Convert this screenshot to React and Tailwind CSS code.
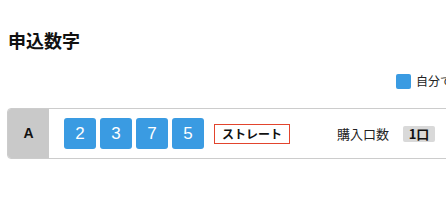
export default function App() {
  const nums = ["2", "3", "7", "5"];
  return (
    <div className="w-[446px] h-[210px] overflow-hidden bg-white" style={{ fontFamily: '"Noto Sans CJK JP", "Liberation Sans", sans-serif' }}>
      <div className="w-[500px]">
        <h1 className="pl-[8px] pt-[28px] text-[18px] leading-[24px] font-bold text-[#111]">申込数字</h1>
        <div className="mt-[21px] pl-[396px] flex items-center gap-[5px] h-[16px]">
          <span className="w-[15px] h-[15px] rounded-[2px] bg-[#3a9be2]" />
          <span className="text-[12px] leading-[16px] text-[#222] whitespace-nowrap">自分で選択</span>
        </div>
        <div className="mt-[19px] ml-[7px] h-[51px] border border-[#cccccc] rounded-[4px] flex items-stretch overflow-hidden">
          <div className="w-[41px] bg-[#c9c9c9] flex items-center justify-center text-[14px] font-bold text-[#111]" style={{ fontFamily: '"Liberation Sans", sans-serif' }}>A</div>
          <div className="flex items-center pl-[15px]">
            <div className="flex gap-[4px]">
              {nums.map((n, i) => (
                <div key={i} className="w-[32px] h-[31px] rounded-[3px] bg-[#3a9be2] text-white text-[17px] flex items-center justify-center" style={{ fontFamily: '"Liberation Sans", sans-serif' }}>{n}</div>
              ))}
            </div>
            <div className="ml-[10px] w-[76px] h-[20px] border border-[#e2442d] flex items-center justify-center text-[12px] font-bold text-[#111]">ストレート</div>
            <div className="ml-[47px] text-[13px] text-[#222] whitespace-nowrap">購入口数</div>
            <div className="ml-[14px] w-[32px] h-[16px] rounded-[2px] bg-[#d9d9d9] flex items-center justify-center text-[13px] font-bold text-[#111]">1口</div>
          </div>
        </div>
      </div>
    </div>
  );
}
